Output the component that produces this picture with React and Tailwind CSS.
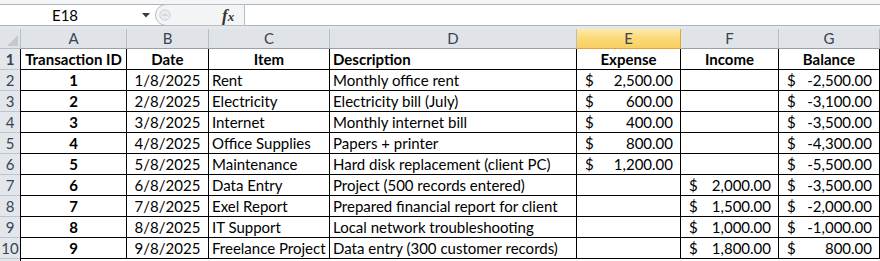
import React from 'react';

// widths include the 1px right border of each cell
const COLS = [
  { key: 'A', w: 'w-[106px]' },
  { key: 'B', w: 'w-[82px]' },
  { key: 'C', w: 'w-[121px]' },
  { key: 'D', w: 'w-[247px]' },
  { key: 'E', w: 'w-[104px]' },
  { key: 'F', w: 'w-[98px]' },
  { key: 'G', w: 'w-[101px]' },
];

const ROWS = [
  [1, '1/8/2025', 'Rent', 'Monthly office rent', '2,500.00', '', '-2,500.00'],
  [2, '2/8/2025', 'Electricity', 'Electricity bill (July)', '600.00', '', '-3,100.00'],
  [3, '3/8/2025', 'Internet', 'Monthly internet bill', '400.00', '', '-3,500.00'],
  [4, '4/8/2025', 'Office Supplies', 'Papers + printer', '800.00', '', '-4,300.00'],
  [5, '5/8/2025', 'Maintenance', 'Hard disk replacement (client PC)', '1,200.00', '', '-5,500.00'],
  [6, '6/8/2025', 'Data Entry', 'Project (500 records entered)', '', '2,000.00', '-3,500.00'],
  [7, '7/8/2025', 'Exel Report', 'Prepared financial report for client', '', '1,500.00', '-2,000.00'],
  [8, '8/8/2025', 'IT Support', 'Local network troubleshooting', '', '1,000.00', '-1,000.00'],
  [9, '9/8/2025', 'Freelance Project', 'Data entry (300 customer records)', '', '1,800.00', '800.00'],
];

const cell = 'h-full shrink-0 border-r border-black flex items-center overflow-hidden whitespace-nowrap';

function Money({ value, w }) {
  return (
    <div className={`${cell} ${w} justify-between pl-[8px] pr-[7px]`}>
      {value ? (
        <>
          <span>$</span>
          <span>{value}</span>
        </>
      ) : null}
    </div>
  );
}

function FormulaBar() {
  return (
    <div className="h-[29px] flex flex-col bg-[#e6e9ed]">
      <div className="h-[4px] bg-[#f4f5f7]" />
      <div className="h-[1px] bg-[#aeb3ba]" />
      <div className="h-[20px] flex bg-white">
        <div className="w-[153px] shrink-0 flex items-center relative">
          <span className="w-[130px] text-center text-[15px] text-black">E18</span>
          <svg className="absolute left-[142px] top-[8px]" width="8" height="5" viewBox="0 0 8 5">
            <path d="M0 0 L8 0 L4 4.5 Z" fill="#3c3c3c" />
          </svg>
        </div>
        <div className="w-[86px] shrink-0 flex items-center relative border-r border-[#aeb3ba]">
          <div className="absolute left-[2px] top-[-1px] h-[22px] w-[90px] rounded-l-full border border-[#b8bdc4] bg-[#f3f4f6]" />
          <svg className="absolute left-[6px] top-[4px]" width="12" height="12" viewBox="0 0 12 12">
            <circle cx="6" cy="6" r="5.2" fill="#e9ebee" stroke="#cdd1d6" />
            <path d="M3.5 6 H8.5" stroke="#c3c7cc" strokeWidth="1.2" />
          </svg>
          <span className="absolute left-[69px] top-[-2px] font-['Liberation_Serif',serif] italic font-bold text-[17px] text-[#333]">
            f<span className="text-[13px]">x</span>
          </span>
        </div>
        <div className="flex-1 bg-white" />
      </div>
      <div className="h-[1px] bg-[#aeb3ba]" />
      <div className="h-[3px] bg-[#e4e7eb]" />
    </div>
  );
}

function HeaderRow() {
  return (
    <div className="h-[20px] flex text-[15px] text-[#3a4350]">
      <div className="w-[21px] shrink-0 h-full bg-[#e0e4e9] border-r border-b border-[#b9bec6] relative">
        <svg className="absolute right-[2px] bottom-[2px]" width="11" height="11" viewBox="0 0 11 11">
          <path d="M11 0 L11 11 L0 11 Z" fill="#c5c9ce" />
        </svg>
      </div>
      {COLS.map((c) =>
        c.key === 'E' ? (
          <div
            key={c.key}
            className={`${c.w} shrink-0 h-full flex items-center justify-center bg-gradient-to-b from-[#fde9a8] via-[#fbd977] to-[#f8d062] border-r border-b border-[#e9a23a]`}
          >
            {c.key}
          </div>
        ) : (
          <div
            key={c.key}
            className={`${c.w} shrink-0 h-full flex items-center justify-center bg-[#e0e4e9] border-r border-b border-r-[#b9bec6] border-b-[#9aa0a8]`}
          >
            {c.key}
          </div>
        )
      )}
      <div className="flex-1 h-full bg-[#e0e4e9]" />
    </div>
  );
}

function RowHead({ n }) {
  return (
    <div className="w-[21px] shrink-0 h-full bg-[#e3e7ec] border-r border-black flex items-center justify-center text-[15px] text-[#3a4350] relative">
      {n ? <span>{n}</span> : null}
      <div className="absolute left-0 right-0 bottom-[-1px] h-[1px] bg-[#bfc4cb]" />
    </div>
  );
}

export default function App() {
  return (
    <div className="w-[880px] h-[261px] overflow-hidden bg-white font-['Lato',sans-serif] text-[15px] text-black">
      <FormulaBar />
      <HeaderRow />

      {/* header row of the table */}
      <div className="h-[21px] flex border-b border-black font-bold">
        <RowHead n={1} />
        <div className={`${cell} ${COLS[0].w} justify-center`}>Transaction ID</div>
        <div className={`${cell} ${COLS[1].w} justify-center`}>Date</div>
        <div className={`${cell} ${COLS[2].w} justify-center`}>Item</div>
        <div className={`${cell} ${COLS[3].w} pl-[3px]`}>Description</div>
        <div className={`${cell} ${COLS[4].w} justify-center`}>Expense</div>
        <div className={`${cell} ${COLS[5].w} justify-center`}>Income</div>
        <div className={`${cell} ${COLS[6].w} justify-center`}>Balance</div>
      </div>

      {ROWS.map((r, i) => (
        <div key={i} className="h-[21px] flex border-b border-black">
          <RowHead n={i + 2} />
          <div className={`${cell} ${COLS[0].w} justify-center font-bold`}>{r[0]}</div>
          <div className={`${cell} ${COLS[1].w} justify-center`}>{r[1]}</div>
          <div className={`${cell} ${COLS[2].w} pl-[3px]`}>{r[2]}</div>
          <div className={`${cell} ${COLS[3].w} pl-[3px]`}>{r[3]}</div>
          <Money value={r[4]} w={COLS[4].w} />
          <Money value={r[5]} w={COLS[5].w} />
          <Money value={r[6]} w={COLS[6].w} />
        </div>
      ))}

      <div className="h-[21px] flex">
        <RowHead />
      </div>
    </div>
  );
}
